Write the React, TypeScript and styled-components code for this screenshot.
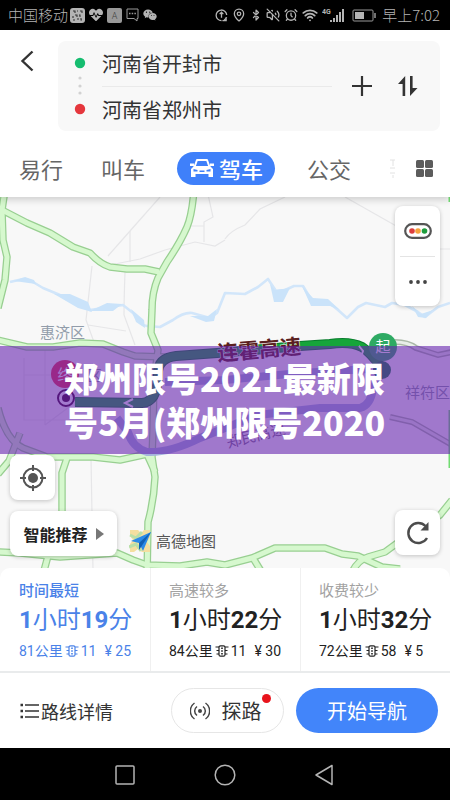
import React from "react";
import styled, { createGlobalStyle } from "styled-components";
import { AlarmClock, Bluetooth, MapPin, VolumeOff, Wifi } from "lucide-react";
import { FaHeartbeat, FaWeixin } from "react-icons/fa";

const Global = createGlobalStyle`
  * { box-sizing: border-box; }
  body { margin: 0; background: #fff; font-family: Roboto, "Noto Sans CJK SC", sans-serif; color: #333; }
  button { font: inherit; color: inherit; border: 0; padding: 0; background: none; cursor: pointer; }
  svg { display: block; flex: none; }
  p, h1 { margin: 0; }
`;

const StatusBar = styled.div`
  display: flex;
  align-items: center;
  justify-content: space-between;
  height: 30px;
  padding: 0 10px 0 8px;
  background: #000;
  color: #b4b4b4;
  font-family: "Noto Sans CJK SC", sans-serif;
  font-size: 15px;
  font-weight: 300;
  line-height: 30px;
`;

const StatusGroup = styled.div`
  display: flex;
  align-items: center;
  gap: 4px;
`;

const CarrierRow = styled.div`
  display: flex;
  align-items: center;
  gap: 2px;
`;

const Header = styled.header`
  position: relative;
  z-index: 2;
  background: #fff;
  padding-top: 11px;
  box-shadow: 0 2px 8px rgba(0, 0, 0, 0.2);
`;

const SearchRow = styled.div`
  display: flex;
  align-items: flex-start;
  padding: 0 10px 0 20px;
`;

const BackButton = styled.button`
  width: 38px;
  height: 40px;
  display: flex;
  align-items: center;
`;

const RouteBox = styled.div`
  flex: 1;
  display: flex;
  align-items: center;
  height: 90px;
  padding: 0 22px 0 16px;
  border-radius: 8px;
  background: #f8f8f8;
`;

const Places = styled.div`
  flex: 1;
  margin: 0 20px 0 16px;
`;

const PlaceInput = styled.input`
  display: block;
  width: 100%;
  height: 45px;
  padding: 0;
  border: 0;
  background: none;
  outline: 0;
  color: #333;
  font-family: "Noto Sans CJK SC", sans-serif;
  font-size: 20px;
  & + & { border-top: 1px solid #eaeaea; }
`;

const RouteActions = styled.div`
  display: flex;
  align-items: center;
  gap: 26px;
`;

const Tabs = styled.nav`
  display: flex;
  align-items: center;
  gap: 26px;
  height: 66px;
  padding: 8px 17px 0 13px;
  font-family: "Noto Sans CJK SC", sans-serif;
  font-size: 22px;
  line-height: 32px;
`;

const Tab = styled.button<{ $active?: boolean }>`
  display: flex;
  align-items: center;
  gap: 5px;
  height: 33px;
  padding: ${(p) => (p.$active ? "0 12px 0 13px" : "0 6px")};
  border-radius: 17px;
  white-space: nowrap;
  color: ${(p) => (p.$active ? "#fff" : "#666")};
  background: ${(p) => (p.$active ? "#3f80fa" : "transparent")};
  font-weight: ${(p) => (p.$active ? 500 : 400)};
`;

const TabsEnd = styled.div`
  display: flex;
  align-items: center;
  gap: 20px;
  margin-left: auto;
`;

const MapArea = styled.main`
  position: relative;
  height: 380px;
  background: #f8f8f8;
  overflow: hidden;
`;

const MapCanvas = styled.svg`
  width: 100%;
  height: 100%;
`;

const MapButton = styled.button`
  display: flex;
  align-items: center;
  justify-content: center;
  width: 45px;
  height: 45px;
  border-radius: 8px;
  background: #fff;
  box-shadow: 0 1px 4px rgba(0, 0, 0, 0.22);
`;

const LayerPanel = styled.div`
  position: absolute;
  top: 9px;
  right: 10px;
  width: 45px;
  padding: 0 5px;
  border-radius: 8px;
  background: #fff;
  box-shadow: 0 1px 4px rgba(0, 0, 0, 0.22);
`;

const PanelButton = styled.button`
  display: flex;
  align-items: center;
  justify-content: center;
  width: 100%;
  height: 50px;
  & + & { border-top: 1px solid #e4e4e4; }
`;

const LeftTools = styled.div`
  position: absolute;
  left: 10px;
  top: 258px;
  display: flex;
  flex-direction: column;
  gap: 11px;
`;

const RecommendRow = styled.div`
  display: flex;
  align-items: center;
  gap: 12px;
`;

const RecommendButton = styled(MapButton)`
  width: 107px;
  gap: 8px;
  font-family: "Noto Sans CJK SC", sans-serif;
  font-size: 16px;
  font-weight: 700;
  color: #222;
`;

const MapBrand = styled.div`
  display: flex;
  align-items: center;
  gap: 4px;
  padding-top: 14px;
  font-family: "Noto Sans CJK SC", sans-serif;
  font-size: 15px;
  line-height: 24px;
  color: #555;
`;

const RefreshSpot = styled.div`
  position: absolute;
  right: 10px;
  top: 313px;
`;

const Banner = styled.div`
  position: absolute;
  left: 0;
  right: 0;
  top: 149px;
  display: flex;
  justify-content: center;
  padding: 10px 0;
  background: rgba(101, 35, 175, 0.6);
`;

const BannerTitle = styled.h1`
  width: 322px;
  color: #fff;
  font-family: "Noto Sans CJK SC", sans-serif;
  font-size: 34px;
  font-weight: 900;
  line-height: 44px;
  white-space: nowrap;
`;

const Options = styled.section`
  position: relative;
  z-index: 1;
  display: grid;
  grid-template-columns: repeat(3, 1fr);
  margin-top: -9px;
  border-radius: 10px 10px 0 0;
  border-bottom: 2px solid #e9ebec;
  background: #fff;
`;

const Option = styled.button<{ $active?: boolean }>`
  height: 103px;
  padding: 10px 0 8px 19px;
  text-align: left;
  white-space: nowrap;
  color: ${(p) => (p.$active ? "#4a82e8" : "#222")};
  & + & {
    padding-left: 18px;
    border-left: 1px solid #f0f0f0;
  }
`;

const OptionLabel = styled.div<{ $active?: boolean }>`
  font-family: "Noto Sans CJK SC", sans-serif;
  font-size: 15px;
  line-height: 22px;
  font-weight: ${(p) => (p.$active ? 500 : 400)};
  color: ${(p) => (p.$active ? "#4a82e8" : "#a2a2a2")};
`;

const OptionTime = styled.div`
  font-size: 24px;
  line-height: 38px;
  b { font-weight: 700; }
`;

const OptionMeta = styled.div`
  display: flex;
  align-items: center;
  font-size: 14px;
  line-height: 24px;
  gap: 2px;
`;

const Fee = styled.span`
  margin-left: 6px;
`;

const Footer = styled.footer`
  display: flex;
  align-items: center;
  gap: 12px;
  height: 75px;
  padding: 0 12px 0 20px;
  font-family: "Noto Sans CJK SC", sans-serif;
  font-size: 20px;
`;

const DetailButton = styled.button`
  display: flex;
  align-items: center;
  gap: 2px;
  margin-right: auto;
  font-size: 18px;
`;

const Pill = styled.button<{ $primary?: boolean }>`
  position: relative;
  display: flex;
  align-items: center;
  justify-content: center;
  gap: 12px;
  width: ${(p) => (p.$primary ? 142 : 113)}px;
  height: 45px;
  padding-right: ${(p) => (p.$primary ? 0 : 4)}px;
  border-radius: 23px;
  border: ${(p) => (p.$primary ? "0" : "1px solid #e6e6e6")};
  color: ${(p) => (p.$primary ? "#fff" : "#333")};
  background: ${(p) => (p.$primary ? "#4285fa" : "#fff")};
`;

const RedDot = styled.span`
  position: absolute;
  top: 5px;
  right: 12px;
  width: 9px;
  height: 9px;
  border-radius: 50%;
  background: #e8141c;
`;

const NavBar = styled.nav`
  display: flex;
  align-items: center;
  justify-content: center;
  gap: 78px;
  height: 53px;
  background: #000;
`;

const NavButton = styled.button`
  width: 22px;
  height: 22px;
`;

const majorRoads = [
  "M5 190 L2 210 L3 240 L7 257 L5 280 L-2 308",
  "M0 209 L27 223 L50 233 L73 247 L90 253 Q100 264 110 267 L127 269 L145 269 L159 272",
  "M194 190 Q192 215 187 227 Q180 243 167 262 L158 278 Q152 292 152 310 L151 333 L158 350 L154 380 L153 430 L152 457 L155 477 Q154 500 148 522 L147 580",
  "M-2 340 L27 347 L53 347 L80 343 L103 344 L123 352 L135 356 L165 357",
  "M-2 408 Q6 440 23 448 L47 457 L93 457 L120 460 L152 453",
  "M-2 474 L9 461 L20 433",
  "M67 458 L62 473 L62 512",
  "M-2 552 L20 553 L60 557 L117 553 L133 560 L147 565 L180 566 L207 562 L225 565 L252 558 L275 548 L325 548 L342 554 L358 556 L382 567 L400 569",
  "M48 556 L42 578",
  "M253 558 L264 576",
  "M352 572 Q358 560 368 557 L385 552 L400 541 L440 515 L452 500",
  "M145 450 L155 472",
];

const minorRoads = [
  "M160 197 L130 231 L108 256",
  "M130 231 L130 262 M125 272 Q124 300 124 315 L135 345",
  "M92 266 L86 320 L95 345",
  "M88 325 L126 331",
  "M110 265 L140 259 L165 250 L195 242 L215 246 L225 240",
  "M207 190 L213 217 L204 222 V242 M190 226 H204",
  "M225 239 Q230 231 245 225 L260 209 L285 197",
  "M345 197 L398 227 M440 249 H450",
  "M91 458 L93 570 M24 358 V420 H85 M24 375 H65 M45 350 V425 M45 425 L85 395",
];

const routePath =
  "M382 368 Q370 352 362 347 Q350 341 330 344 L300 346 L217 353 L176 356 Q158 358 158 373 Q158 402 142 403 L75 402";

function StatusIcons() {
  return (
    <StatusGroup>
      <svg width="13" height="15" viewBox="0 0 14 15" fill="none" stroke="#b4b4b4" strokeWidth="1.4">
        <path d="M12.6 7A5.7 5.7 0 1 0 7 13M7 4v6M5 6l2-2 2 2M12 9v4H8M12.8 9.5l-3 3" />
      </svg>
      <MapPin size={14} color="#b4b4b4" strokeWidth={2.2} />
      <Bluetooth size={12} color="#b4b4b4" strokeWidth={2.4} />
      <VolumeOff size={14} color="#b4b4b4" strokeWidth={2.2} />
      <AlarmClock size={14} color="#b4b4b4" strokeWidth={2.2} />
      <Wifi size={16} color="#b4b4b4" strokeWidth={2.8} />
      <svg width="24" height="15" viewBox="0 0 24 15" fill="#b4b4b4">
        <text x="0" y="6" fontSize="7" fontWeight="700" fontFamily="Roboto, sans-serif">4G</text>
        <path d="M8 12h2v2H8zM11 10h2v4h-2zM14 7h2v7h-2zM17 4h2v10h-2zM20 1h2v13h-2z" />
      </svg>
      <svg width="28" height="13" viewBox="0 0 28 13">
        <rect x="3" y="1" width="20" height="11" rx="1" fill="none" stroke="#999" />
        <rect x="5" y="3" width="9" height="7" fill="#b4b4b4" />
        <path d="M25 4v5" stroke="#999" strokeWidth="1.500" />
      </svg>
      <span>早上7:02</span>
    </StatusGroup>
  );
}

function RoadMap() {
  return (
    <MapCanvas viewBox="0 197 450 380" preserveAspectRatio="xMidYMid slice" fill="none" role="img" aria-label="路线地图">
      <g stroke="#e6e6e8" strokeWidth="1.200">
        {minorRoads.map((d) => <path key={d} d={d} />)}
      </g>
      <path
        d="M10 282 L23 279 L33 282 L43 288 L60 295 L77 300 L90 310 L110 307 L123 305 L133 313 Q140 326 147 326 L160 327 L173 320 Q184 312 192 313 L210 318 L217 313 L225 293 L245 294 L258 287 L268 279 L276 291 L285 290 L294 286 L303 286 L312 301 L328 302 L338 310 L347 318 L358 307 L366 303 L385 307 L392 303 L405 305 L418 312 L425 317 L438 307 L450 303"
        stroke="#d2e6fa" strokeWidth="2.600" strokeLinejoin="round"
      />
      <path
        d="M14 281 L25 277 L34 280 L36 284ZM54 294 L70 294 L88 302 L92 312 L78 308ZM90 311 L107 303 L122 304 L113 311ZM131 309 L144 320 L145 328 L136 322ZM190 316 L208 316 L217 309 L214 321 L206 322ZM270 284 L275 290 L290 288 L283 302 L274 302ZM302 286 L313 298 L328 299 L340 310 L330 306 L311 306ZM412 306 L421 314 L433 310 L426 318 L418 317Z"
        fill="#cae3fa"
      />
      <g stroke="#98cf91" strokeWidth="7.500" strokeLinejoin="round">
        {majorRoads.map((d) => <path key={d} d={d} />)}
      </g>
      <g stroke="#d6f8ce" strokeWidth="5" strokeLinejoin="round">
        {majorRoads.map((d) => <path key={d} d={d} />)}
      </g>
      <path d="M395 342 Q408 342 416 348 L438 355 L452 352 M390 417 L412 422 L452 445" stroke="#aab8a8" strokeWidth="6" />
      <path d="M395 342 Q408 342 416 348 L438 355 L452 352 M390 417 L412 422 L452 445" stroke="#e8eee8" strokeWidth="3" />
      <path d="M450 197V202M450 410V468" stroke="#72dc72" strokeWidth="3" />
      <path
        d="M382 372 L373 388 Q371 405 360 408 L320 408 L258 415 L200 438 Q170 453 147 452 Q132 447 128 432 L117 418 M165 382 L225 380 L300 373 L370 369"
        stroke="#a5b4dc" strokeWidth="8" strokeLinejoin="round"
      />
      <path d={routePath} stroke="#087c2d" strokeWidth="10" strokeLinejoin="round" />
      <path d={routePath} stroke="#16a53a" strokeWidth="8" strokeLinejoin="round" />
      <path d="M133 399 L125 403 L133 407M359 346 L363 351 L362 354" stroke="#fff" strokeWidth="2" />
      <g fontFamily='"Noto Sans CJK SC", sans-serif' fontSize="15">
        <text x="40" y="338" fill="#919caa">惠济区</text>
        <text x="405" y="398" fill="#8995a6">祥符区</text>
        <text x="87" y="381" fill="#8995a6">区</text>
        <text x="228" y="448" fill="#7d6f8c" transform="rotate(-14 228 448)">郑民高速</text>
      </g>
      <g fontFamily='"Noto Sans CJK SC", sans-serif' fontSize="21" fontWeight="700" fill="#5a2020" transform="rotate(-5 218 361)">
        <text x="218" y="361" stroke="#f8f8f8" strokeWidth="1" paintOrder="stroke">连霍高速</text>
      </g>
      <circle cx="382" cy="370" r="9" fill="#168344" />
      <circle cx="383" cy="347" r="14" fill="#2eaa63" />
      <circle cx="65" cy="374" r="14" fill="#e63450" />
      <circle cx="66" cy="398" r="8" fill="#fff" stroke="#3c0636" strokeWidth="2" />
      <circle cx="66" cy="398" r="4" fill="#3c0636" />
      <g fontFamily='"Noto Sans CJK SC", sans-serif' fontSize="15" fill="#fff" textAnchor="middle">
        <text x="383" y="352">起</text>
        <text x="65" y="380">终</text>
      </g>
    </MapCanvas>
  );
}

function LightIcon() {
  return (
    <svg width="14" height="12" viewBox="0 0 14 12" fill="none" stroke="currentColor" strokeWidth="1.200">
      <rect x="4" y="0.800" width="6" height="10.400" rx="1.500" />
      <path d="M0.500 2H4M1.500 5.500H4M1.500 9H4M10 2h3.500M10 5.500h2.500M10 9h2.500" />
      <path d="M7 2.500v1.500M7 5.300v1.500M7 8v1.500" strokeWidth="1.600" />
    </svg>
  );
}

interface RouteOption {
  label: string;
  minutes: string;
  km: string;
  lights: string;
  fee: string;
}

const routeOptions: RouteOption[] = [
  { label: "时间最短", minutes: "19", km: "81", lights: "11", fee: "25" },
  { label: "高速较多", minutes: "22", km: "84", lights: "11", fee: "30" },
  { label: "收费较少", minutes: "32", km: "72", lights: "58", fee: "5" },
];

export default function App() {
  return (
    <>
      <Global />
      <StatusBar>
        <CarrierRow>
          <span>中国移动</span>
          <StatusGroup>
            <svg width="15" height="15" viewBox="0 0 15 15">
              <rect width="15" height="15" rx="3" fill="#b4b4b4" />
              <path d="M3 3h2v2M7 3h1M10 3h2v2M5 7h2v2M9 7h1v2M3 8v2M3 12h2M7 11h2M11 10v2h1" fill="none" stroke="#333" strokeWidth="1.100" />
            </svg>
            <FaHeartbeat size={14} />
            <svg width="15" height="15" viewBox="0 0 15 15">
              <rect width="15" height="15" rx="2" fill="#999" />
              <text x="7.500" y="11" textAnchor="middle" fontSize="9" fontFamily="Roboto, sans-serif" fill="#444">A</text>
            </svg>
            <svg width="13" height="14" viewBox="0 0 13 14" fill="none" stroke="#999">
              <path d="M1 1h11v9.500h-1v2.500l-3-2.500H1z" />
              <path d="M3 5.500h7" strokeWidth="1.500" strokeDasharray="1.500 1.200" />
            </svg>
            <FaWeixin size={14} />
          </StatusGroup>
        </CarrierRow>
        <StatusIcons />
      </StatusBar>

      <Header>
        <SearchRow>
          <BackButton aria-label="返回">
            <svg width="14" height="22" viewBox="0 0 14 22" fill="none" stroke="#333" strokeWidth="2.400">
              <path d="M12.500 1.500L2.500 11l10 9.500" />
            </svg>
          </BackButton>
          <RouteBox>
            <svg width="12" height="58" viewBox="0 0 12 58">
              <circle cx="6" cy="6" r="5.200" fill="#16bd70" />
              <g fill="#d2d2d2">
                <circle cx="6" cy="21" r="1.600" />
                <circle cx="6" cy="29" r="1.600" />
                <circle cx="6" cy="36" r="1.600" />
              </g>
              <circle cx="6" cy="52" r="5.200" fill="#e5373d" />
            </svg>
            <Places>
              <PlaceInput aria-label="起点" defaultValue="河南省开封市" />
              <PlaceInput aria-label="终点" defaultValue="河南省郑州市" />
            </Places>
            <RouteActions>
              <button aria-label="添加途经点">
                <svg width="20" height="20" viewBox="0 0 20 20" stroke="#333" strokeWidth="2.200">
                  <path d="M10 0v20M0 10h20" />
                </svg>
              </button>
              <button aria-label="交换起终点">
                <svg width="20" height="20" viewBox="0 0 20 20">
                  <path d="M7.200 0v20H4.600V8H0zM12 0h2.600v12H19.500L12 20z" fill="#333" />
                </svg>
              </button>
            </RouteActions>
          </RouteBox>
        </SearchRow>
        <Tabs>
          <Tab>易行</Tab>
          <Tab>叫车</Tab>
          <Tab $active>
            <svg width="24" height="20" viewBox="0 0 24 20">
              <path d="M4.500 9L7 2h10l2.500 7" fill="none" stroke="#fff" strokeWidth="2" strokeLinejoin="round" />
              <path d="M0 5.500h4v2.500H0zM20 5.500h4v2.500h-4z" fill="#fff" />
              <path d="M4 8h16l3 3v8h-4.500v-3h-13v3H1v-8z" fill="#fff" />
              <path d="M3.500 11l4 1v1.500h-4zM20.500 11l-4 1v1.500h4zM9.500 12.500h5V14h-5z" fill="#3f80fa" />
            </svg>
            驾车
          </Tab>
          <Tab>公交</Tab>
          <TabsEnd>
            <svg width="6" height="20" viewBox="0 0 6 20" fill="none" stroke="#e2e2e2">
              <path d="M0 2h5M3 2v6M0 10h5M0 15h5M3 17v3" />
            </svg>
            <button aria-label="全部出行方式">
              <svg width="17" height="17" viewBox="0 0 17 17" fill="#5c5c5c">
                <rect width="8" height="8" rx="1.500" />
                <rect x="9" width="8" height="8" rx="1.500" />
                <rect y="9" width="8" height="8" rx="1.500" />
                <rect x="9" y="9" width="8" height="8" rx="1.500" />
              </svg>
            </button>
          </TabsEnd>
        </Tabs>
      </Header>

      <MapArea>
        <RoadMap />
        <LayerPanel>
          <PanelButton aria-label="路况">
            <svg width="28" height="16" viewBox="0 0 28 16">
              <rect x="1.200" y="1.200" width="25.600" height="13.600" rx="6.800" fill="#fff" stroke="#555" strokeWidth="2.200" />
              <circle cx="8" cy="8" r="2.800" fill="#dc3e3e" />
              <circle cx="14" cy="8" r="2.800" fill="#f5a23c" />
              <circle cx="20.500" cy="8" r="2.800" fill="#1f9d3d" />
            </svg>
          </PanelButton>
          <PanelButton aria-label="更多">
            <svg width="18" height="4" viewBox="0 0 18 4" fill="#444">
              <circle cx="2" cy="2" r="1.900" />
              <circle cx="9" cy="2" r="1.900" />
              <circle cx="16" cy="2" r="1.900" />
            </svg>
          </PanelButton>
        </LayerPanel>
        <LeftTools>
          <MapButton aria-label="定位">
            <svg width="26" height="26" viewBox="0 0 26 26" fill="none" stroke="#555" strokeWidth="2">
              <circle cx="13" cy="13" r="9.500" />
              <circle cx="13" cy="13" r="5" fill="#555" stroke="none" />
              <path d="M13 0v6M13 20v6M0 13h6M20 13h6" />
            </svg>
          </MapButton>
          <RecommendRow>
            <RecommendButton>
              智能推荐
              <svg width="8" height="12" viewBox="0 0 8 12"><path d="M0 0l8 6-8 6z" fill="#777" /></svg>
            </RecommendButton>
            <MapBrand>
              <svg width="23" height="24" viewBox="0 0 23 24">
                <path d="M1 1h8l3 3 3-3h6v8l-3 4 3 4v6h-8l-4-3-4 3H1v-8l3-4-3-4z" fill="#f4dfa0" />
                <path d="M1 6l6 3 6-6M0 18l7-3 5 7" stroke="#b9dfa8" strokeWidth="3" fill="none" />
                <path d="M22 3L2 12l8 2 4 8z" fill="#2b8ae8" />
                <path d="M22 3L10 14v7z" fill="#1260b4" />
              </svg>
              高德地图
            </MapBrand>
          </RecommendRow>
        </LeftTools>
        <RefreshSpot>
          <MapButton aria-label="刷新">
            <svg width="24" height="24" viewBox="0 0 24 24">
              <path d="M19.500 5A10 10 0 1 0 21 17" fill="none" stroke="#4c4c4c" strokeWidth="2.400" />
              <path d="M22.500 1v8.500h-8z" fill="#4c4c4c" />
            </svg>
          </MapButton>
        </RefreshSpot>
        <Banner>
          <BannerTitle>
            郑州限号2021最新限
            <br />
            号5月(郑州限号2020
          </BannerTitle>
        </Banner>
      </MapArea>

      <Options>
        {routeOptions.map((o, i) => (
          <Option key={o.label} $active={i === 0}>
            <OptionLabel $active={i === 0}>{o.label}</OptionLabel>
            <OptionTime><b>1</b>小时<b>{o.minutes}</b>分</OptionTime>
            <OptionMeta>
              <span>{o.km}公里</span>
              <LightIcon />
              <span>{o.lights}</span>
              <Fee>¥ {o.fee}</Fee>
            </OptionMeta>
          </Option>
        ))}
      </Options>

      <Footer>
        <DetailButton>
          <svg width="19" height="16" viewBox="0 0 19 16" stroke="#333" strokeWidth="1.500">
            <path d="M5 2h14M5 8h14M5 14h14" />
            <path d="M0.500 2h2.500M0.500 8h2.500M0.500 14h2.500" strokeWidth="2.500" />
          </svg>
          路线详情
        </DetailButton>
        <Pill>
          <svg width="20" height="18" viewBox="0 0 20 18" fill="none" stroke="#444" strokeWidth="1.500">
            <circle cx="10" cy="9" r="2" fill="#444" stroke="none" />
            <path d="M7 4.500a5.500 5.500 0 0 0 0 9M13 4.500a5.500 5.500 0 0 1 0 9M4.500 1a9.800 9.800 0 0 0 0 16M15.500 1a9.800 9.800 0 0 1 0 16" />
          </svg>
          探路
          <RedDot />
        </Pill>
        <Pill $primary>开始导航</Pill>
      </Footer>

      <NavBar>
        <NavButton aria-label="最近任务">
          <svg width="22" height="22" viewBox="0 0 22 22" fill="none" stroke="#b4b4b4" strokeWidth="1.500">
            <rect x="2" y="2" width="18" height="18" rx="1" />
          </svg>
        </NavButton>
        <NavButton aria-label="主屏幕">
          <svg width="22" height="22" viewBox="0 0 22 22" fill="none" stroke="#b4b4b4" strokeWidth="1.500">
            <circle cx="11" cy="11" r="9.800" />
          </svg>
        </NavButton>
        <NavButton aria-label="后退">
          <svg width="22" height="22" viewBox="0 0 22 22" fill="none" stroke="#b4b4b4" strokeWidth="1.500">
            <path d="M18 1.500v19L2 11z" strokeLinejoin="round" />
          </svg>
        </NavButton>
      </NavBar>
    </>
  );
}
